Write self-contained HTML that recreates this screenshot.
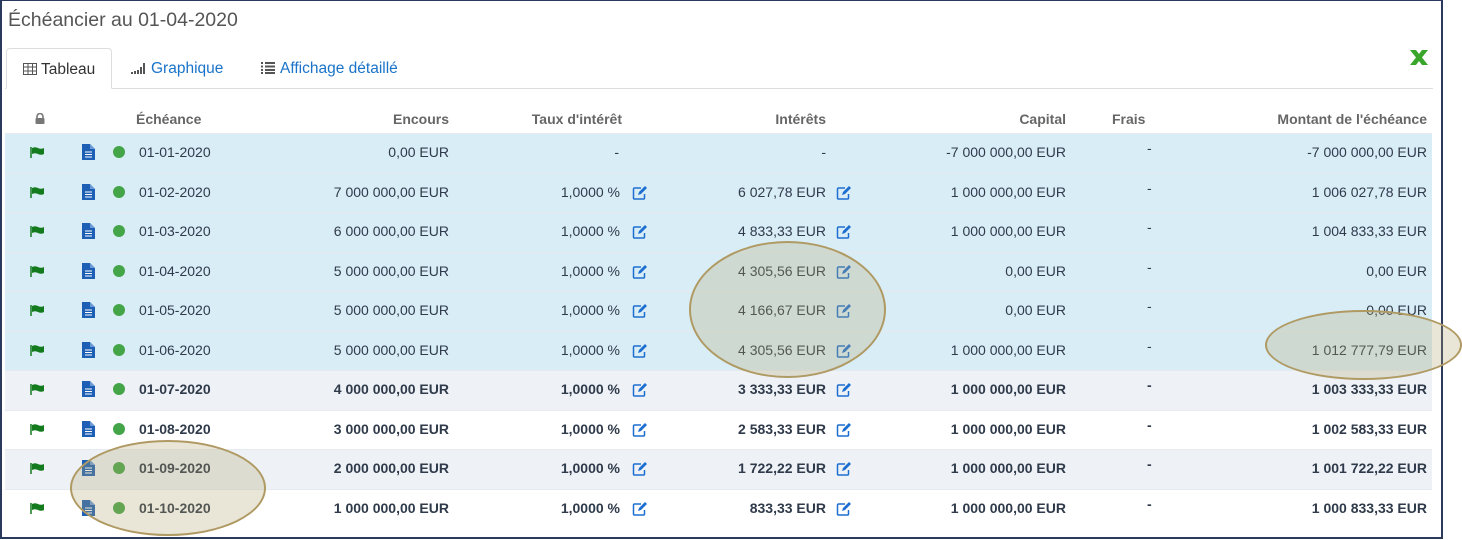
<!DOCTYPE html>
<html><head><meta charset="utf-8"><style>
*{margin:0;padding:0;box-sizing:border-box}
body{width:1462px;height:540px;background:#fff;font-family:"Liberation Sans",Arial,sans-serif;position:relative;overflow:hidden;color:#2f3a4a}
.frame{position:absolute;left:0;top:0;width:1443px;height:539px;border:2px solid #2b3a5c;border-top:1px solid #2b3a5c}
.title{position:absolute;left:8px;top:9px;font-size:19.5px;color:#555}
.tab{position:absolute;top:48px;height:41px;font-size:15.5px;line-height:42px}
.t1{left:6px;width:106px;border:1px solid #ddd;border-bottom:1px solid #fff;border-radius:4px 4px 0 0;background:#fff;padding-left:16px;color:#333;z-index:2}
.tabline{position:absolute;left:5px;top:88px;width:1428px;height:1px;background:#ddd}
.t2{left:131px;color:#1a73c9}
.t3{left:261px;color:#1a73c9}
.row{position:absolute;left:5px;width:1427px;height:39.5px;border-top:1px solid #e6eaef}
.c{position:absolute;font-size:14px;white-space:nowrap}
.h{position:absolute;top:111px;font-size:14px;font-weight:bold;color:#666}
.r{text-align:right}
.ell{position:absolute;border:2px solid #b09a63;border-radius:50%;background:rgba(180,165,110,0.28)}
</style></head><body>
<div class="frame"></div>
<div class="title">Échéancier au 01-04-2020</div>
<div class="tab t1"><svg width="14" height="12" style="vertical-align:-1px;margin-right:4px" viewBox="0 0 14 12"><rect x="0.5" y="0.5" width="13" height="11" fill="none" stroke="#555"/><path d="M0 4h14M0 8h14M5 0v12M9.5 0v12" stroke="#555"/></svg>Tableau</div>
<div class="tab t2"><svg width="16" height="12" style="vertical-align:-1px;margin-right:4px" viewBox="0 0 16 12"><rect x="0" y="10" width="2" height="2" fill="#555"/><rect x="3" y="9" width="2" height="3" fill="#555"/><rect x="6" y="8" width="2" height="4" fill="#555"/><rect x="9" y="5" width="2" height="7" fill="#555"/><rect x="12" y="1" width="2" height="11" fill="#555"/></svg>Graphique</div>
<div class="tab t3"><svg width="14" height="12" style="vertical-align:-1px;margin-right:5px" viewBox="0 0 14 12"><path d="M0 1h2M0 4.5h2M0 8h2M0 11h2M4 1h10M4 4.5h10M4 8h10M4 11h10" stroke="#555" stroke-width="2"/></svg>Affichage détaillé</div>
<div class="tabline"></div>
<svg style="position:absolute;left:1409px;top:50px" width="20" height="15" viewBox="0 0 20 15"><path d="M1 0h6l3 4 3-4h6l-6 7.5 6 7.5h-6l-3-4-3 4H1l6-7.5z" fill="#3aa52b"/></svg>

<svg style="position:absolute;left:35px;top:113px" width="10" height="11" viewBox="0 0 10 11"><path d="M2 5V3.5a3 3 0 0 1 6 0V5" fill="none" stroke="#777" stroke-width="1.6"/><rect x="0.5" y="5" width="9" height="6" rx="1" fill="#777"/></svg>
<div class="h" style="left:136px">Échéance</div>
<div class="h r" style="right:1013px">Encours</div>
<div class="h r" style="right:840px">Taux d'intérêt</div>
<div class="h r" style="right:636px">Intérêts</div>
<div class="h r" style="right:396px">Capital</div>
<div class="h" style="left:1112px">Frais</div>
<div class="h r" style="right:35px">Montant de l'échéance</div>

<div id="rows"></div>
<script>
var d=[
["01-01-2020","0,00 EUR","-","-","-7 000 000,00 EUR","-7 000 000,00 EUR",0],
["01-02-2020","7 000 000,00 EUR","1,0000 %","6 027,78 EUR","1 000 000,00 EUR","1 006 027,78 EUR",0],
["01-03-2020","6 000 000,00 EUR","1,0000 %","4 833,33 EUR","1 000 000,00 EUR","1 004 833,33 EUR",0],
["01-04-2020","5 000 000,00 EUR","1,0000 %","4 305,56 EUR","0,00 EUR","0,00 EUR",0],
["01-05-2020","5 000 000,00 EUR","1,0000 %","4 166,67 EUR","0,00 EUR","0,00 EUR",0],
["01-06-2020","5 000 000,00 EUR","1,0000 %","4 305,56 EUR","1 000 000,00 EUR","1 012 777,79 EUR",0],
["01-07-2020","4 000 000,00 EUR","1,0000 %","3 333,33 EUR","1 000 000,00 EUR","1 003 333,33 EUR",1],
["01-08-2020","3 000 000,00 EUR","1,0000 %","2 583,33 EUR","1 000 000,00 EUR","1 002 583,33 EUR",2],
["01-09-2020","2 000 000,00 EUR","1,0000 %","1 722,22 EUR","1 000 000,00 EUR","1 001 722,22 EUR",1],
["01-10-2020","1 000 000,00 EUR","1,0000 %","833,33 EUR","1 000 000,00 EUR","1 000 833,33 EUR",2]];
var edit='<svg width="16" height="14" viewBox="0 0 16 14"><path d="M9 2H2.5a1 1 0 0 0-1 1v9a1 1 0 0 0 1 1h9a1 1 0 0 0 1-1V8" fill="none" stroke="#1d6ed1" stroke-width="1.5"/><path d="M6 9l1-3 6-6 2 2-6 6z" fill="#1d6ed1"/></svg>';
var h='';
d.forEach(function(r,i){
 var y=133+i*39.5, bg=r[6]==0?'#d9edf7':(r[6]==1?'#eef2f7':'#fff'), b=r[6]?'font-weight:bold;':'';
 var ty=y+11;
 h+='<div class="row" style="top:'+y+'px;background:'+bg+'"></div>';
 h+='<svg style="position:absolute;left:30px;top:'+(y+14)+'px" width="15" height="11" viewBox="0 0 15 11"><path d="M1 0v11" stroke="#137a1e" stroke-width="1.5"/><path d="M2 1q3-1.5 6 0t6 0v6q-3 1.5-6 0t-6 0z" fill="#137a1e"/></svg>';
 h+='<svg style="position:absolute;left:82px;top:'+(y+11)+'px" width="13" height="16" viewBox="0 0 13 16"><path d="M0 0h8l5 5v11H0z" fill="#1d5fb5"/><path d="M8 0v5h5" fill="#6d9ad6"/><path d="M3 8h7M3 10.5h7M3 13h7" stroke="#fff" stroke-width="1"/></svg>';
 h+='<div style="position:absolute;left:113px;top:'+(y+13)+'px;width:12px;height:12px;border-radius:50%;background:#44a548"></div>';
 h+='<div class="c" style="'+b+'left:139px;top:'+ty+'px">'+r[0]+'</div>';
 h+='<div class="c r" style="'+b+'right:1013px;top:'+ty+'px">'+r[1]+'</div>';
 h+='<div class="c r" style="'+b+'right:'+(i==0?843:842)+'px;top:'+ty+'px">'+r[2]+'</div>';
 h+='<div class="c r" style="'+b+'right:636px;top:'+ty+'px">'+r[3]+'</div>';
 if(i>0){h+='<div style="position:absolute;left:632px;top:'+(y+13)+'px">'+edit+'</div><div style="position:absolute;left:836px;top:'+(y+13)+'px">'+edit+'</div>';}
 h+='<div class="c r" style="'+b+'right:396px;top:'+ty+'px">'+r[4]+'</div>';
 h+='<div class="c" style="'+b+'left:1147px;top:'+(ty-4)+'px">-</div>';
 h+='<div class="c r" style="'+b+'right:35px;top:'+ty+'px">'+r[5]+'</div>';
});
document.getElementById('rows').innerHTML=h;
</script>
<div class="ell" style="left:689px;top:241px;width:197px;height:137px"></div>
<div class="ell" style="left:1265px;top:310px;width:197px;height:70px"></div>
<div class="ell" style="left:70px;top:440px;width:196px;height:96px"></div>
</body></html>
